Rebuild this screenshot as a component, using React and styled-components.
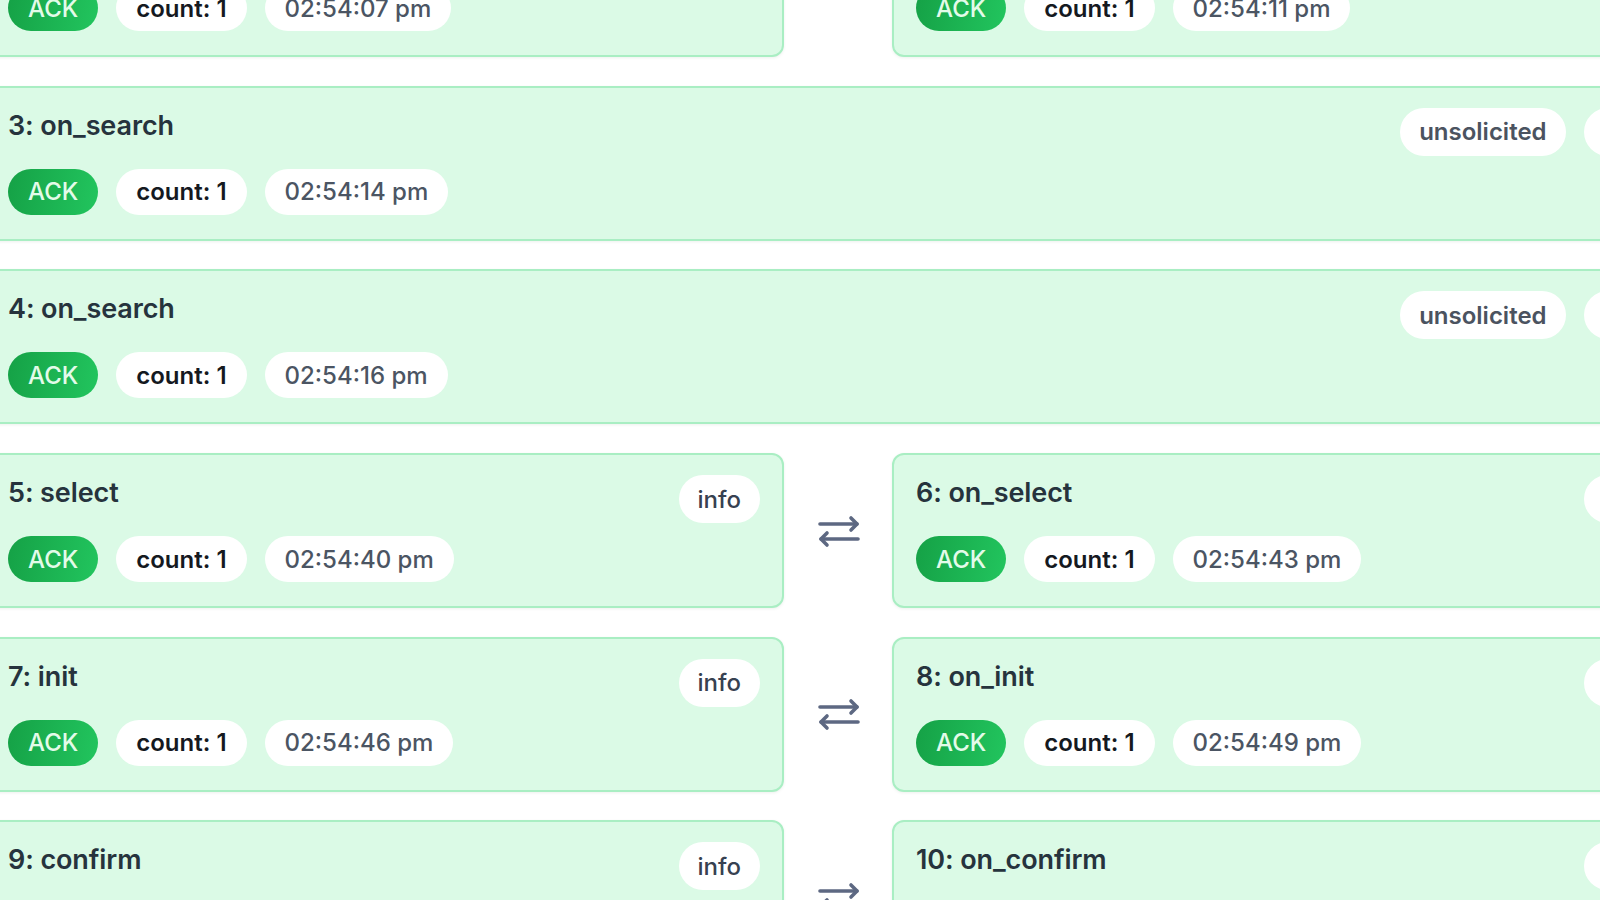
import React from 'react'
import styled, { createGlobalStyle } from 'styled-components'

const GlobalStyle = createGlobalStyle`
  html, body {
    margin: 0;
    padding: 0;
    background: #ffffff;
    overflow: hidden;
  }
  body {
    font-family: Inter, "Noto Sans", "Liberation Sans", sans-serif;
  }
`

const calls = [
    {
        type: 'pair',
        left: { id: 1, action: 'search', count: 'count: 1', time: '02:54:07 pm', tags: ['info'] },
        right: { id: 2, action: 'on_search', count: 'count: 1', time: '02:54:11 pm', tags: ['info'] },
    },
    { type: 'single', card: { id: 3, action: 'on_search', count: 'count: 1', time: '02:54:14 pm', tags: ['unsolicited', 'info'] } },
    { type: 'single', card: { id: 4, action: 'on_search', count: 'count: 1', time: '02:54:16 pm', tags: ['unsolicited', 'info'] } },
    {
        type: 'pair',
        left: { id: 5, action: 'select', count: 'count: 1', time: '02:54:40 pm', tags: ['info'] },
        right: { id: 6, action: 'on_select', count: 'count: 1', time: '02:54:43 pm', tags: ['info'] },
    },
    {
        type: 'pair',
        left: { id: 7, action: 'init', count: 'count: 1', time: '02:54:46 pm', tags: ['info'] },
        right: { id: 8, action: 'on_init', count: 'count: 1', time: '02:54:49 pm', tags: ['info'] },
    },
    {
        type: 'pair',
        left: { id: 9, action: 'confirm', count: 'count: 1', time: '02:54:52 pm', tags: ['info'] },
        right: { id: 10, action: 'on_confirm', count: 'count: 1', time: '02:54:55 pm', tags: ['info'] },
    },
]

function SwapIcon() {
    return (
        <svg width="44" height="34" viewBox="0 0 44 34" fill="none" stroke="#5d6882" strokeWidth="3.6" strokeLinecap="round" strokeLinejoin="round">
            <path d="M3 10h37" />
            <path d="M34 4l6 6-6 6" />
            <path d="M41 25H4" />
            <path d="M10 19l-6 6 6 6" />
        </svg>
    )
}

function CallCard({ call }) {
    return (
        <Card>
            <Header>
                <Title>{call.id}: {call.action}</Title>
                <Tags>
                    {call.tags.map(t => <Tag key={t} tone={t}>{t}</Tag>)}
                </Tags>
            </Header>
            <Badges>
                <Ack>ACK</Ack>
                <Pill bold>{call.count}</Pill>
                <Pill>{call.time}</Pill>
            </Badges>
        </Card>
    )
}

export default function App() {
    return (
        <>
            <GlobalStyle />
            <Page>
                <Flow>
                    {calls.map((row, i) => row.type === 'pair' ? (
                        <PairRow key={i}>
                            <CallCard call={row.left} />
                            <Arrow><SwapIcon /></Arrow>
                            <CallCard call={row.right} />
                        </PairRow>
                    ) : (
                        <CallCard key={i} call={row.card} />
                    ))}
                </Flow>
            </Page>
        </>
    )
}

const Page = styled.div`
  width: 1600px;
  height: 900px;
  overflow: hidden;
  background: #ffffff;
`

const Flow = styled.div`
  display: flex;
  flex-direction: column;
  gap: 28.7px;
  width: 1705px;
  margin-top: -98px;
  margin-left: -16px;
`

const PairRow = styled.div`
  display: grid;
  grid-template-columns: 800px 108px 1fr;
  align-items: center;
`

const Arrow = styled.div`
  display: flex;
  justify-content: center;
  align-items: center;
  padding-left: 2px;
`

const Card = styled.div`
  box-sizing: border-box;
  height: 155px;
  padding: 20px 22px 0 22px;
  background: #dbfae6;
  border: 2px solid #a9eec3;
  border-radius: 12px;
  box-shadow: 0 1px 3px rgba(20, 80, 40, 0.08);
`

const Header = styled.div`
  display: flex;
  justify-content: space-between;
  align-items: flex-start;
  height: 48px;
`

const Title = styled.div`
  line-height: 36px;
  font-size: 27px;
  font-weight: 600;
  color: #26333d;
  letter-spacing: -0.1px;
`

const Tags = styled.div`
  display: flex;
  gap: 18px;
`

const Tag = styled.span`
  display: inline-flex;
  align-items: center;
  height: 48px;
  padding: 0 19px;
  border-radius: 999px;
  background: #ffffff;
  font-size: 24px;
  font-weight: ${p => (p.tone === 'unsolicited' ? 600 : 500)};
  color: ${p => (p.tone === 'unsolicited' ? '#4b5360' : '#374151')};
`

const Badges = styled.div`
  display: flex;
  align-items: center;
  gap: 18px;
  margin-top: 13px;
`

const Pill = styled.span`
  display: inline-flex;
  align-items: center;
  height: 46px;
  padding: 0 20px;
  border-radius: 999px;
  background: #ffffff;
  font-size: 24px;
  font-weight: ${p => (p.bold ? 600 : 500)};
  color: ${p => (p.bold ? '#15191f' : '#4b5563')};
`

const Ack = styled(Pill)`
  background: linear-gradient(100deg, #15a146 0%, #22c55e 100%);
  color: #e3fbe9;
  font-weight: 500;
`
